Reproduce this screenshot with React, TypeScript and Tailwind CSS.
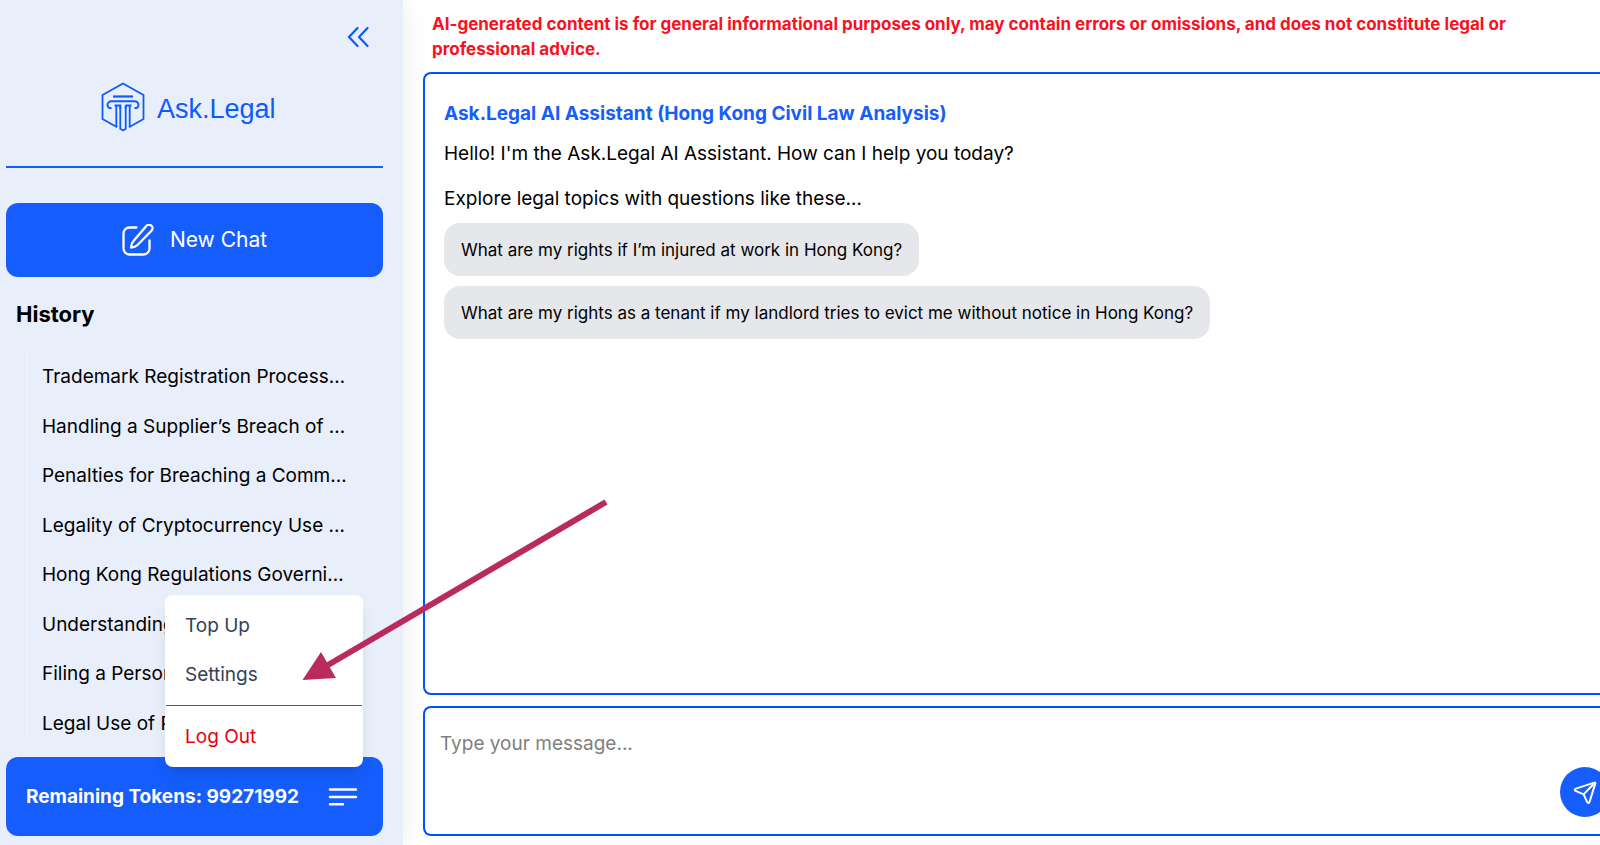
import { useState } from 'react';

const historyItems = [
  'Trademark Registration Process…',
  'Handling a Supplier’s Breach of …',
  'Penalties for Breaching a Comm…',
  'Legality of Cryptocurrency Use …',
  'Hong Kong Regulations Governi…',
  'Understanding…',
  'Filing a Person…',
  'Legal Use of P…',
];

const suggestions = [
  'What are my rights if I’m injured at work in Hong Kong?',
  'What are my rights as a tenant if my landlord tries to evict me without notice in Hong Kong?',
];

function LogoMark() {
  return (
    <svg viewBox="0 0 44 50" className="h-[50px] w-[44px]" fill="none" stroke="currentColor" strokeWidth="1.8">
      <path d="M16.2 45.200 1.500 37V13L22 1.500 42.500 13v24L28 45.200" />
      <path d="M12 14.500h20" strokeWidth="2.200" />
      <path d="M10.500 26C8 26.500 6.500 25 6.500 23S8 19.200 10.500 19.200h23c2.500 0 4 1.800 4 3.800s-1.500 3.500-4 3" strokeWidth="2" />
      <path d="M15.300 45V23.500h4v23.300L22 48.500l2.700-1.700V23.500M13.500 23.500h6M28.700 45V23.500M24.500 23.500h6" />
      <path d="M19.300 27v-3.500M24.700 27v-3.500" />
    </svg>
  );
}

function CollapseIcon() {
  return (
    <svg viewBox="0 0 22 22" className="size-[22px]" fill="none" stroke="currentColor" strokeWidth="2.200" strokeLinecap="round" strokeLinejoin="round">
      <path d="M10.500 2 2 11l8.500 9M20.500 2 12 11l8.500 9" />
    </svg>
  );
}

function ComposeIcon() {
  return (
    <svg viewBox="0 0 32 32" className="size-8" fill="none" stroke="currentColor" strokeWidth="2.300" strokeLinecap="round" strokeLinejoin="round">
      <path d="M14.500 3.500H7.500a6 6 0 0 0-6 6V24.500a6 6 0 0 0 6 6h14a6 6 0 0 0 6-6V16.500" />
      <path d="M24.500 1.800a3.500 3.500 0 0 1 5 5L15.500 21c-1.500 1.500-3.500 2.300-6.500 2.500.2-3 1-5 2.500-6.500z" />
    </svg>
  );
}

function SendIcon() {
  return (
    <svg viewBox="0 0 24 24" className="size-6" fill="none" stroke="currentColor" strokeWidth="2" strokeLinecap="round" strokeLinejoin="round">
      <path d="M21.400 2.600 2.800 8.600c-1.200.4-1.300 1.800-.2 2.300l8 3.500 3.600 7.800c.5 1.100 1.900 1 2.300-.2L22.300 3.400c.2-.6-.3-1-.9-.8z" />
      <path d="M21.800 2.800 10.600 14.400" />
    </svg>
  );
}

function Sidebar() {
  return (
    <aside className="relative z-10 flex w-[403px] shrink-0 flex-col bg-[#e8eefa] pr-5 pb-[9px] pl-[6px] shadow-[0_0_24px_rgba(0,0,0,0.08)]">
      <div className="flex justify-end pt-[26px] pr-[14px] text-[#0d5bff]">
        <button type="button" aria-label="Collapse sidebar">
          <CollapseIcon />
        </button>
      </div>

      <div className="mt-[34px] flex items-center gap-3 pl-[95px] text-[#0d5bff]">
        <LogoMark />
        <span className="pt-1 font-['Liberation_Sans',sans-serif] text-[27px] leading-[46px]">Ask.Legal</span>
      </div>
      <hr className="mt-[34px] border-t-2 border-blue-600" />

      <button
        type="button"
        className="mt-[35px] flex h-[74px] shrink-0 items-center justify-center gap-4 rounded-xl bg-blue-600 text-[21px] text-white"
      >
        <ComposeIcon />
        New Chat
      </button>

      <h2 className="mt-[22px] pl-[10px] text-[22px] leading-[30px] font-bold">History</h2>

      <ul className="mt-[23px] ml-5 flex flex-1 flex-col justify-between border-l-2 border-[#eef0fd] pt-3 pl-[14px] text-[19px] leading-[26px]">
        {historyItems.map((item) => (
          <li key={item}>
            <a href="#" className="block whitespace-nowrap">
              {item}
            </a>
          </li>
        ))}
      </ul>

      <AccountBar />
    </aside>
  );
}

function AccountBar() {
  const [open, setOpen] = useState(true);

  return (
    <div className="relative mt-5 flex h-[79px] shrink-0 items-center justify-between rounded-xl bg-blue-600 pr-[25px] pl-5 text-white">
      <span className="pt-[2px] text-[19px] font-bold">Remaining Tokens: 99271992</span>
      <button type="button" aria-label="Account menu" onClick={() => setOpen(!open)}>
        <svg viewBox="0 0 30 18" className="h-[18px] w-[30px]" stroke="currentColor" strokeWidth="2.400" strokeLinecap="round">
          <path d="M2 1.500h26M2 9h26M2 16.200h13" />
        </svg>
      </button>

      {/* Account menu */}
      {open && (
        <div className="absolute right-5 bottom-[69px] flex w-[198px] flex-col rounded-lg bg-white py-[6px] text-[19px] text-slate-700 shadow-lg">
          <button type="button" className="h-[49px] px-5 pt-[2px] text-left">
            Top Up
          </button>
          <button type="button" className="h-[49px] px-5 pt-[2px] text-left">
            Settings
          </button>
          <hr className="mx-px my-[6px] border-blue-600" />
          <button type="button" className="h-[49px] px-5 pt-[2px] text-left text-red-600">
            Log Out
          </button>
        </div>
      )}
    </div>
  );
}

export default function App() {
  return (
    <div className="relative flex h-screen overflow-hidden bg-white font-['Inter',sans-serif] text-black">
      <Sidebar />

      <main className="flex min-w-0 flex-1 flex-col pb-[9px] pl-5">
        <p className="pt-3 pr-5 pl-[9px] text-[17px] leading-[25px] font-bold text-[#fa1020]">
          AI-generated content is for general informational purposes only, may contain errors or omissions, and does not
          constitute legal or professional advice.
        </p>

        {/* Conversation */}
        <section className="mt-[10px] flex-1 rounded-l-lg border-2 border-r-0 border-[#0050ff] px-[19px] pt-[25px] text-[19px] leading-[30px]">
          <h1 className="font-bold text-blue-600">Ask.Legal AI Assistant (Hong Kong Civil Law Analysis)</h1>
          <p className="mt-[10px]">Hello! I'm the Ask.Legal AI Assistant. How can I help you today?</p>
          <p className="mt-[15px]">Explore legal topics with questions like these…</p>
          <div className="mt-[9px] flex flex-col items-start gap-[10px]">
            {suggestions.map((question) => (
              <button key={question} type="button" className="h-[53px] rounded-2xl bg-gray-200 px-[17px] text-[17px]">
                {question}
              </button>
            ))}
          </div>
        </section>

        {/* Message box */}
        <form className="mt-[11px] flex h-[130px] shrink-0 items-end overflow-hidden rounded-l-lg border-2 border-r-0 border-[#0050ff]">
          <textarea
            aria-label="Message"
            placeholder="Type your message..."
            className="h-full flex-1 resize-none px-[15px] pt-[21px] text-[19px] leading-[30px] outline-none placeholder:text-[#808080]"
          />
          <button
            type="button"
            aria-label="Send"
            className="-mr-[10px] mb-[17px] flex size-[50px] items-center justify-center rounded-full bg-blue-600 text-white"
          >
            <SendIcon />
          </button>
        </form>
      </main>

      {/* Arrow pointing at Settings */}
      <svg viewBox="0 0 340 220" className="pointer-events-none absolute top-[480px] left-[290px] z-20 h-[220px] w-[340px]">
        <path d="M316 22 38 185" stroke="#b82b5b" strokeWidth="6" />
        <path d="M12.500 200 31 172 46 198z" fill="#b82b5b" />
      </svg>
    </div>
  );
}
